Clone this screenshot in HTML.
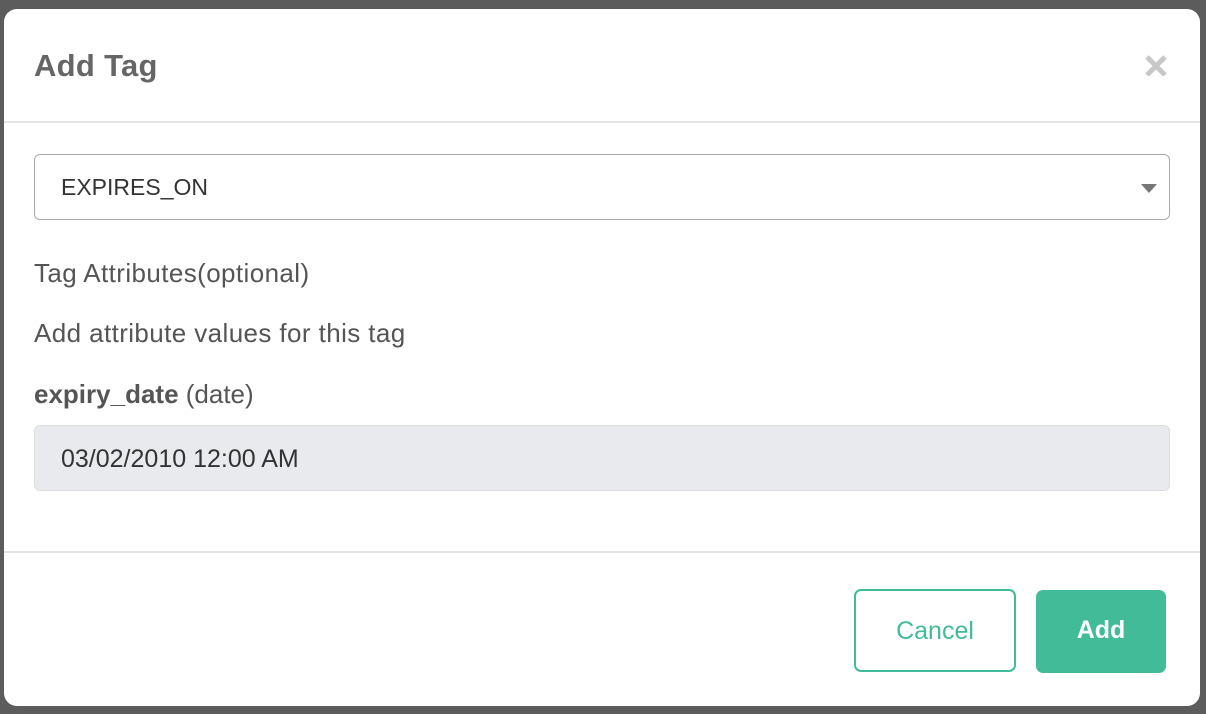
<!DOCTYPE html>
<html><head><style>
body{margin:0;width:1206px;height:714px;background:#5c5c5c;overflow:hidden;font-family:"Source Sans Pro","Liberation Sans",sans-serif;position:relative}
.m{position:absolute;left:4px;top:9px;width:1196px;height:697px;background:#fff;border-radius:13px}
.t{position:absolute;left:30px;top:39px;font-size:31px;font-weight:bold;color:#666;letter-spacing:0.3px}
.x{position:absolute;left:1140px;top:45px}
.hr{position:absolute;left:0;width:1196px;height:2px;background:#e5e5e5}
.sel{position:absolute;left:30px;top:145px;width:1136px;height:66px;border:1.5px solid #aaa;border-radius:6px;box-sizing:border-box}
.sel span{position:absolute;left:26px;top:19px;font-size:23px;color:#333}
.tri{position:absolute;right:12px;top:29px;width:0;height:0;border-left:8px solid transparent;border-right:8px solid transparent;border-top:9px solid #777}
.l{position:absolute;left:30px;font-size:26px;color:#555;letter-spacing:0.4px}
.inp{position:absolute;left:30px;top:416px;width:1136px;height:66px;background:#e9eaee;border:1px solid #ddd;border-radius:6px;box-sizing:border-box}
.inp span{position:absolute;left:26px;top:19px;font-size:25px;color:#333}
.b{position:absolute;top:580px;height:83px;border-radius:7px;box-sizing:border-box;font-size:25px;text-align:center;line-height:80px}
</style></head><body>
<div class="m">
<div class="t">Add Tag</div>
<svg class="x" width="24" height="24" viewBox="0 0 24 24"><path d="M3 3L21 21M21 3L3 21" stroke="#c8c8c8" stroke-width="5"/></svg>
<div class="hr" style="top:112px"></div>
<div class="sel"><span>EXPIRES_ON</span><div class="tri"></div></div>
<div class="l" style="top:249px">Tag Attributes(optional)</div>
<div class="l" style="top:309px">Add attribute values for this tag</div>
<div class="l" style="top:370px;letter-spacing:0"><b>expiry_date</b> (date)</div>
<div class="inp"><span>03/02/2010 12:00 AM</span></div>
<div class="hr" style="top:542px"></div>
<div class="b" style="left:850px;width:162px;border:2px solid #42bb99;color:#42bb99">Cancel</div>
<div class="b" style="left:1032px;width:130px;top:581px;height:83px;background:#42bb99;color:#fff;font-weight:bold">Add</div>
</div>
</body></html>
